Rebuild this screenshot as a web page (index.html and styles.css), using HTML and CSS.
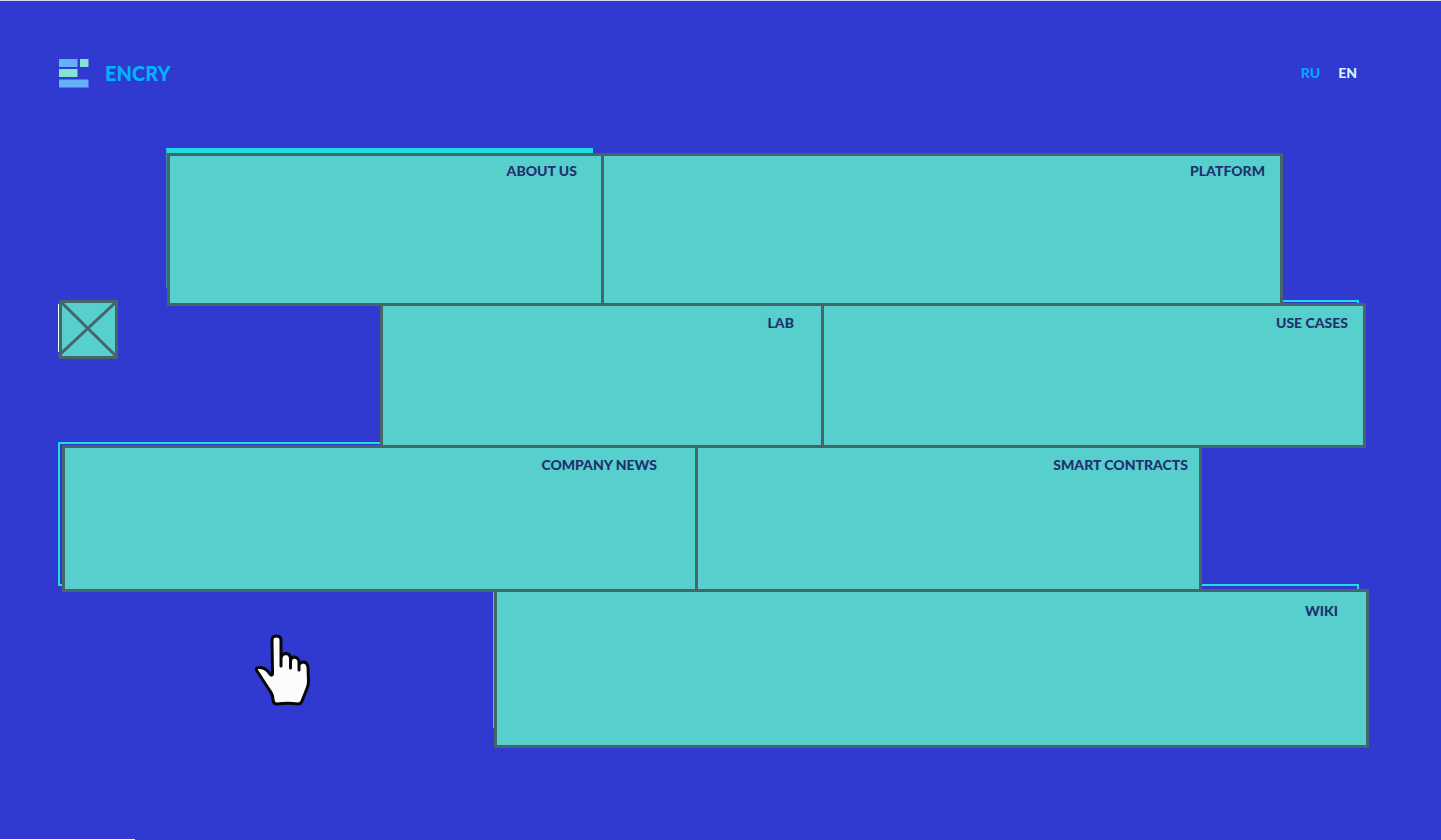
FILE: index.html
```html
<!DOCTYPE html>
<html lang="en">
<head>
<meta charset="utf-8">
<meta name="viewport" content="width=device-width, initial-scale=1">
<title>Encry</title>
<link rel="stylesheet" href="styles.css">
</head>
<body class="page">
<header class="header">
  <a class="brand" href="#">
    <svg class="brand-mark" viewBox="0 0 30 30" aria-hidden="true">
      <path fill="#66b0fa" d="M0 1h18.500v8H0zM0 21.500h29.500v8H0z"/>
      <path fill="#83e4d6" d="M21 1h8.500v8H21zM0 11h18.500v8H0z"/>
    </svg>
    <span class="brand-name">ENCRY</span>
  </a>
  <nav class="languages" aria-label="Language">
    <a class="language" href="#ru">RU</a>
    <a class="language language-current" href="#en">EN</a>
  </nav>
</header>
<main class="board">
  <div class="row row-first">
    <a class="tile tile-about" href="#about">ABOUT US</a>
    <a class="tile tile-platform" href="#platform">PLATFORM</a>
  </div>
  <div class="row row-second">
    <button class="close" type="button" aria-label="Close menu">
      <svg class="close-icon" viewBox="0 0 60 60" aria-hidden="true">
        <path class="close-edge" d="M.5 5v48"/>
        <path class="close-box" d="M2.500 2.500h56v56h-56z"/>
        <path class="close-cross" d="M2.500 2.500l56 55M58.500 2.500L1.500 56"/>
      </svg>
    </button>
    <a class="tile tile-lab" href="#lab">LAB</a>
    <a class="tile tile-cases" href="#cases">USE CASES</a>
  </div>
  <div class="row row-third">
    <a class="tile tile-news" href="#news">COMPANY NEWS</a>
    <a class="tile tile-contracts" href="#contracts">SMART CONTRACTS</a>
  </div>
  <div class="row row-fourth">
    <a class="tile tile-wiki" href="#wiki">WIKI</a>
  </div>
</main>
<svg class="pointer" viewBox="0 0 56 72" aria-hidden="true">
  <path d="M17.500 37.500L17 6Q17 2 21.500 2Q26 2 26 6V32V24Q27 19.500 31.500 19.500Q35.500 20 35.500 25V34V27Q36 23 39.500 23Q44 24 44 28V36V31Q45 28 49 28Q52.500 29 53 33L53.500 48Q53.500 51 51 57L47 67Q46 70 43 70Q33 68.500 22 70Q18.500 70 18 66Q18 61 15 57L2 37Q0 33.500 4 33.500Q10 33.500 13.500 38Q16.500 43 17.500 40Z"/>
</svg>
<div class="progress"></div>
</body>
</html>
```
FILE: styles.css
```css
* { box-sizing: border-box; }

.page {
  position: relative;
  margin: 0;
  min-height: 100vh;
  border-top: 1px solid #d8daf5;
  background: #3039d0;
  font-family: Lato, "Open Sans", sans-serif;
}

a { text-decoration: none; }

.header {
  display: flex;
  align-items: center;
  justify-content: space-between;
  padding: 57px 84px 65px 59px;
}

.brand {
  display: flex;
  align-items: center;
  gap: 16px;
  color: #00b2ff;
}

.brand-mark { width: 30px; height: 30px; }

.brand-name {
  font-size: 20px;
  font-weight: 900;
  line-height: 28px;
}

.languages { display: flex; gap: 18px; }

.language {
  color: #00a9ff;
  font-size: 14px;
  font-weight: 900;
  line-height: 20px;
}

.language-current { color: #d2f8f8; }

.board { position: relative; z-index: 0; }

.row { display: grid; }

.row + .row { margin-top: -3px; }

.row-first {
  grid-template-columns: 167fr 434fr 679fr 161fr;
  min-height: 153px;
}

.row-second {
  grid-template-columns: 58fr 322fr 441fr 542fr 78fr;
  min-height: 145px;
}

.row-third {
  grid-template-columns: 62fr 633fr 504fr 242fr;
  min-height: 147px;
}

.row-fourth {
  grid-template-columns: 494fr 872fr 75fr;
  min-height: 159px;
}

.tile {
  position: relative;
  margin-right: -3px;
  border: 3px solid #44666b;
  background: #56cfcd;
  color: #22306e;
  font-size: 14px;
  font-weight: 900;
  line-height: 20px;
  text-align: right;
}

.tile-about { grid-column: 2; padding: 5px 24px 0 0; }
.tile-platform { grid-column: 3; padding: 5px 15px 0 0; }
.tile-lab { grid-column: 3; padding: 7px 27px 0 0; }
.tile-cases { grid-column: 4; padding: 7px 15px 0 0; }
.tile-news { grid-column: 2; padding: 7px 38px 0 0; }
.tile-contracts { grid-column: 3; padding: 7px 11px 0 0; }
.tile-wiki { grid-column: 2; padding: 9px 28px 0 0; }

/* Bright frames that show from behind the tiles */
.tile-about::before,
.tile-cases::before,
.tile-news::before,
.tile-wiki::before {
  content: "";
  position: absolute;
  z-index: -1;
  border: 2px solid #20dce0;
}

.tile-about::before { inset: -8px 8px 15px -4px; border-width: 5px 1px 1px; border-left-color: #3c88a8; }
.tile-cases::before { inset: -6px 4px 15px 0; }
.tile-news::before { inset: -6px 8px 3px -7px; }
.tile-wiki::before { inset: -8px 7px 17px -4px; }

.close {
  grid-column: 2;
  align-self: start;
  width: 60px;
  height: 60px;
  margin-top: -4px;
  padding: 0;
  border: 0;
  background: none;
}

.close-icon { display: block; width: 60px; height: 60px; }
.close-edge { stroke: #e8ffff; }
.close-box { fill: #56cfcd; stroke: #44666b; stroke-width: 3px; }
.close-cross { fill: none; stroke: #44666b; stroke-width: 3px; stroke-linecap: square; }

.pointer {
  position: absolute;
  top: 633px;
  left: 255px;
  width: 56px;
  height: 72px;
  fill: #fcfcfc;
  stroke: #050808;
  stroke-width: 3px;
  stroke-linejoin: round;
}

.progress {
  position: absolute;
  bottom: 0;
  left: 0;
  width: 135px;
  height: 1px;
  background: #fff;
}
```
